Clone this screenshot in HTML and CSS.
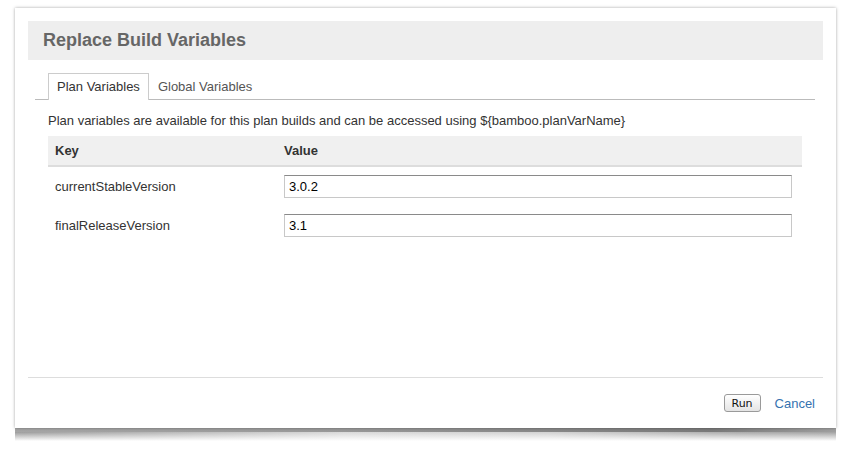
FILE: index.html
```html
<!DOCTYPE html>
<html>
<head>
<meta charset="utf-8">
<link rel="stylesheet" href="styles.css">
</head>
<body>
<div class="stage">
  <div class="dialog">
    <div class="dialog-header"><h2 class="dialog-title">Replace Build Variables</h2></div>
    <ul class="tabs">
      <li class="tab active">Plan Variables</li>
      <li class="tab">Global Variables</li>
    </ul>
    <div class="content">
      <p class="desc">Plan variables are available for this plan builds and can be accessed using ${bamboo.planVarName}</p>
      <table class="vars">
        <thead>
          <tr><th class="col-key">Key</th><th>Value</th></tr>
        </thead>
        <tbody>
          <tr><td class="col-key">currentStableVersion</td><td><input class="text" type="text" value="3.0.2"></td></tr>
          <tr><td class="col-key">finalReleaseVersion</td><td><input class="text" type="text" value="3.1"></td></tr>
        </tbody>
      </table>
    </div>
    <div class="footer">
      <button class="btn" type="button">Run</button>
      <a class="cancel" href="#">Cancel</a>
    </div>
  </div>
  <div class="curl"></div>
</div>
</body>
</html>
```

FILE: styles.css
```css
html, body {
  margin: 0;
  padding: 0;
  background: #fff;
}
body {
  font-family: "Liberation Sans", Arial, sans-serif;
  font-size: 13px;
  color: #333;
}
.stage {
  width: 821px;
  margin: 8px 0 0 15px;
}
.dialog {
  position: relative;
  z-index: 1;
  height: 420px;
  background: #fff;
  box-shadow: 0 0 3px rgba(0,0,0,0.35);
  display: flex;
  flex-direction: column;
}
.curl {
  height: 13px;
  background:
    linear-gradient(to bottom, rgba(255,255,255,0) 0%, rgba(255,255,255,0) 30%, #fff 100%),
    linear-gradient(to right, #9a9a9a 0%, #b0b0b0 15%, #d8d8d8 40%, #d0d0d0 65%, #a8a8a8 88%, #a0a0a0 100%);
  position: relative;
}
.curl::before {
  content: "";
  position: absolute;
  left: 0;
  right: 0;
  top: 0;
  height: 4px;
  background: linear-gradient(to right, #a6a6a6 0%, #999 40%, #7a7a7a 85%, #a0a0a0 100%);
}
.dialog-header {
  margin: 13px 13px 0;
  height: 39px;
  background: #eee;
  padding-left: 15px;
}
.dialog-title {
  margin: 0;
  font-size: 18px;
  line-height: 39px;
  font-weight: bold;
  color: #666;
}
.tabs {
  list-style: none;
  margin: 13px 21px 0 20px;
  padding: 0 0 0 13px;
  display: flex;
  border-bottom: 1px solid #bbb;
}
.tab {
  padding: 0 8px;
  line-height: 25px;
  border: 1px solid transparent;
  border-bottom: none;
  margin-bottom: -1px;
  color: #555;
}
.tab.active {
  border-color: #ccc;
  background: #fff;
  padding-bottom: 1px;
  color: #333;
}
.content {
  margin: 0 34px 0 33px;
}
.desc {
  margin: 13px 0 7px;
  line-height: 16px;
  color: #333;
}
.vars {
  width: 100%;
  border-collapse: collapse;
}
.vars th {
  text-align: left;
  background: #f0f0f0;
  height: 29px;
  padding: 0;
  border-bottom: 2px solid #ddd;
  font-weight: bold;
  color: #333;
}
.vars .col-key {
  width: 229px;
  padding-left: 7px;
}
.vars td {
  height: 39px;
  padding: 0 10px 0 0;
  vertical-align: middle;
}
.vars td.col-key {
  padding: 0 0 0 7px;
  color: #333;
}
.text {
  display: block;
  box-sizing: border-box;
  width: 100%;
  height: 23px;
  margin: 0;
  padding: 0 4px;
  font-family: "Liberation Sans", Arial, sans-serif;
  font-size: 13px;
  color: #000;
  border: 1px solid #c8c8c8;
  border-top-color: #8a8a8a;
  background: #fff;
}
.footer {
  margin: auto 13px 0;
  border-top: 1px solid #ddd;
  height: 50px;
  display: flex;
  align-items: center;
  justify-content: flex-end;
  padding-right: 8px;
}
.btn {
  box-sizing: border-box;
  width: 37px;
  height: 18px;
  padding: 0;
  margin: 0 14px 0 0;
  font-family: "DejaVu Sans", "Liberation Sans", sans-serif;
  font-size: 11px;
  color: #111;
  border: 1px solid #9a9a9a;
  border-radius: 3px;
  background: linear-gradient(to bottom, #fff, #e4e4e4);
}
.cancel {
  font-size: 13px;
  color: #3572b0;
  text-decoration: none;
}
```
